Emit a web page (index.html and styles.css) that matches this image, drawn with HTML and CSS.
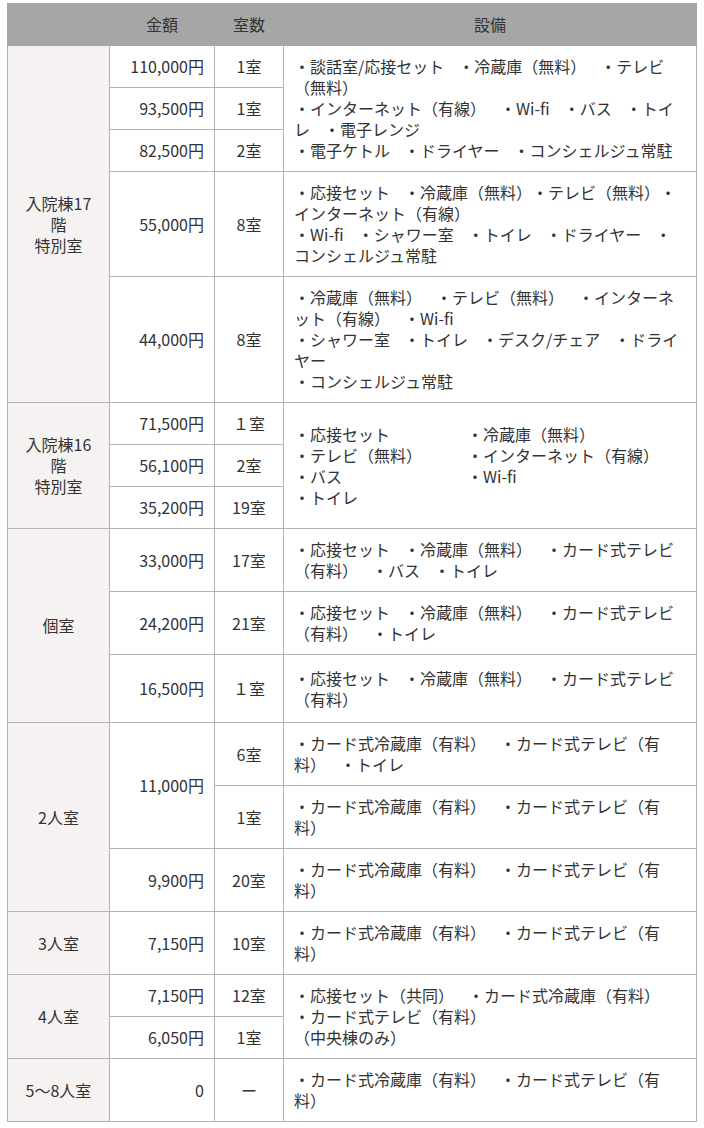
FILE: index.html
```html
<!DOCTYPE html>
<html lang="ja">
<head>
<meta charset="utf-8">
<link rel="stylesheet" href="styles.css">
</head>
<body>
<div class="wrap">
<table class="rooms">
  <colgroup>
    <col class="c1"><col class="c2"><col class="c3"><col class="c4">
  </colgroup>
  <thead>
    <tr><th></th><th>金額</th><th>室数</th><th>設備</th></tr>
  </thead>
  <tbody>
    <tr>
      <td class="kind" rowspan="5">入院棟17<br>階<br>特別室</td>
      <td class="price">110,000円</td><td class="num">1室</td>
      <td class="fac" rowspan="3">・談話室/応接セット<span class="g">　</span>・冷蔵庫（無料）<span class="g">　</span>・テレビ（無料）<br>・インターネット（有線）<span class="g">　</span>・Wi-fi<span class="g">　</span>・バス<span class="g">　</span>・トイレ<span class="g">　</span>・電子レンジ<br>・電子ケトル<span class="g">　</span>・ドライヤー<span class="g">　</span>・コンシェルジュ常駐</td>
    </tr>
    <tr><td class="price">93,500円</td><td class="num">1室</td></tr>
    <tr><td class="price">82,500円</td><td class="num">2室</td></tr>
    <tr>
      <td class="price">55,000円</td><td class="num">8室</td>
      <td class="fac">・応接セット<span class="g">　</span>・冷蔵庫（無料）・テレビ（無料）・インターネット（有線）<br>・Wi-fi<span class="g">　</span>・シャワー室<span class="g">　</span>・トイレ<span class="g">　</span>・ドライヤー<span class="g">　</span>・コンシェルジュ常駐</td>
    </tr>
    <tr>
      <td class="price">44,000円</td><td class="num">8室</td>
      <td class="fac">・冷蔵庫（無料）<span class="g">　</span>・テレビ（無料）<span class="g">　</span>・インターネット（有線）<span class="g">　</span>・Wi-fi<br>・シャワー室<span class="g">　</span>・トイレ<span class="g">　</span>・デスク/チェア<span class="g">　</span>・ドライヤー<br>・コンシェルジュ常駐</td>
    </tr>

    <tr>
      <td class="kind" rowspan="3">入院棟16<br>階<br>特別室</td>
      <td class="price">71,500円</td><td class="num">１室</td>
      <td class="fac" rowspan="3">
        <div class="grid2">
          <span>・応接セット</span><span>・冷蔵庫（無料）</span>
          <span>・テレビ（無料）</span><span>・インターネット（有線）</span>
          <span>・バス</span><span>・Wi-fi</span>
          <span>・トイレ</span>
        </div>
      </td>
    </tr>
    <tr><td class="price">56,100円</td><td class="num">2室</td></tr>
    <tr><td class="price">35,200円</td><td class="num">19室</td></tr>

    <tr>
      <td class="kind" rowspan="3">個室</td>
      <td class="price">33,000円</td><td class="num">17室</td>
      <td class="fac">・応接セット<span class="g">　</span>・冷蔵庫（無料）<span class="g">　</span>・カード式テレビ（有料）<span class="g">　</span>・バス<span class="g">　</span>・トイレ</td>
    </tr>
    <tr>
      <td class="price">24,200円</td><td class="num">21室</td>
      <td class="fac">・応接セット<span class="g">　</span>・冷蔵庫（無料）<span class="g">　</span>・カード式テレビ（有料）<span class="g">　</span>・トイレ</td>
    </tr>
    <tr class="tall">
      <td class="price">16,500円</td><td class="num">１室</td>
      <td class="fac">・応接セット<span class="g">　</span>・冷蔵庫（無料）<span class="g">　</span>・カード式テレビ（有料）</td>
    </tr>

    <tr>
      <td class="kind" rowspan="3">2人室</td>
      <td class="price" rowspan="2">11,000円</td><td class="num">6室</td>
      <td class="fac">・カード式冷蔵庫（有料）<span class="g">　</span>・カード式テレビ（有料）<span class="g">　</span>・トイレ</td>
    </tr>
    <tr>
      <td class="num">1室</td>
      <td class="fac">・カード式冷蔵庫（有料）<span class="g">　</span>・カード式テレビ（有料）</td>
    </tr>
    <tr>
      <td class="price">9,900円</td><td class="num">20室</td>
      <td class="fac">・カード式冷蔵庫（有料）<span class="g">　</span>・カード式テレビ（有料）</td>
    </tr>

    <tr>
      <td class="kind">3人室</td>
      <td class="price">7,150円</td><td class="num">10室</td>
      <td class="fac">・カード式冷蔵庫（有料）<span class="g">　</span>・カード式テレビ（有料）</td>
    </tr>

    <tr>
      <td class="kind" rowspan="2">4人室</td>
      <td class="price">7,150円</td><td class="num">12室</td>
      <td class="fac" rowspan="2">・応接セット（共同）<span class="g">　</span>・カード式冷蔵庫（有料）<br>・カード式テレビ（有料）<br>（中央棟のみ）</td>
    </tr>
    <tr><td class="price">6,050円</td><td class="num">1室</td></tr>

    <tr>
      <td class="kind">5〜8人室</td>
      <td class="price">0</td><td class="num">ー</td>
      <td class="fac">・カード式冷蔵庫（有料）<span class="g">　</span>・カード式テレビ（有料）</td>
    </tr>
  </tbody>
</table>
</div>
</body>
</html>
```

FILE: styles.css
```css
html, body {
  margin: 0;
  padding: 0;
  background: #ffffff;
}

body {
  font-family: "Noto Sans CJK JP", "Noto Sans", sans-serif;
  font-size: 16px;
  line-height: 21px;
  color: #333333;
  text-spacing-trim: space-all;
}

.wrap {
  padding: 3px 8px 0 7px;
}

.rooms {
  width: 689px;
  border-collapse: collapse;
  table-layout: fixed;
}

.c1 { width: 102px; }
.c2 { width: 105px; }
.c3 { width: 69px; }
.c4 { width: 413px; }

.rooms th {
  background: #a6a6a6;
  color: #333333;
  font-weight: normal;
  height: 42px;
  padding: 0 10px;
  text-align: center;
  border: 1px solid #a6a6a6;
  box-sizing: border-box;
}

.rooms td {
  border: 1px solid #b3b3b3;
  padding: 10px;
  vertical-align: middle;
}

.kind {
  background: #f7f2f2;
  text-align: center;
}

.price {
  text-align: right;
}

.num {
  text-align: center;
}

.rooms td.fac {
  text-align: left;
  padding: 10px 13px 10px 10px;
}

.g {
  letter-spacing: -2px;
}

.tall td {
  height: 47px;
}

.grid2 {
  display: grid;
  grid-template-columns: 173px 1fr;
}
```
